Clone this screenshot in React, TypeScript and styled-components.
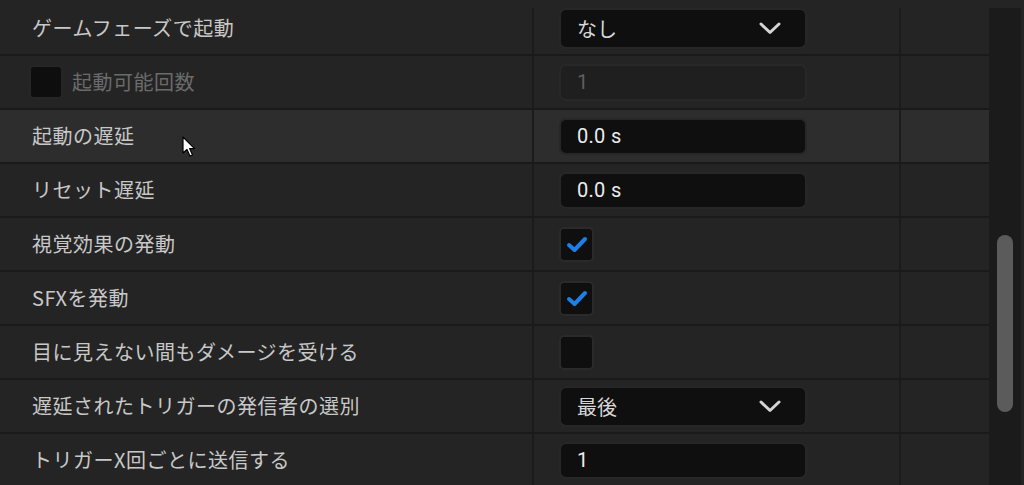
import React from "react";
import styled, { createGlobalStyle } from "styled-components";

const GlobalStyle = createGlobalStyle`
  html, body { margin: 0; padding: 0; background: #242424; }
  body { font-family: "Noto Sans CJK JP", "Noto Sans", sans-serif; }
  * { box-sizing: border-box; }
`;

const Panel = styled.div`
  position: relative;
  display: flex;
  width: 1024px;
  height: 485px;
  padding: 8px 3px 0 0;
  background: #242424;
  overflow: hidden;
`;

const Viewport = styled.div`
  flex: 1;
  overflow: hidden;
`;

const Content = styled.div`
  margin-top: -6px;
`;

const Row = styled.div<{ $hover?: boolean }>`
  display: grid;
  grid-template-columns: 534px 367px 1fr;
  height: 54px;
  border-bottom: 2px solid #1a1a1a;
  background: ${(p) => (p.$hover ? "#2d2d2d" : "#242424")};
`;

const LabelCell = styled.div`
  display: flex;
  align-items: center;
  gap: 9px;
  padding-left: 32px;
  border-right: 2px solid #1b1b1b;
`;

const LabelCellWithBox = styled(LabelCell)`
  padding-left: 29px;
`;

const Label = styled.span<{ $disabled?: boolean }>`
  font-size: 20px;
  color: ${(p) => (p.$disabled ? "#6b6b6b" : "#c8c8c8")};
  white-space: nowrap;
  letter-spacing: 0.5px;
  transform: translateY(-1px);
`;

const ValueCell = styled.div`
  display: flex;
  align-items: center;
  padding-left: 25px;
  border-right: 2px solid #1b1b1b;
`;

const ExtraCell = styled.div``;

const Dropdown = styled.div`
  display: flex;
  align-items: center;
  justify-content: space-between;
  width: 248px;
  height: 41px;
  padding: 0 24px 0 16px;
  background: #0f0f0f;
  border: 2px solid #272727;
  border-radius: 7px;
  font-size: 20px;
  color: #d8d8d8;
`;

const Input = styled.div<{ $disabled?: boolean }>`
  display: flex;
  align-items: center;
  width: 248px;
  height: 37px;
  padding: 0 16px;
  background: ${(p) => (p.$disabled ? "#1f1f1f" : "#0f0f0f")};
  border: 2px solid ${(p) => (p.$disabled ? "#282828" : "#272727")};
  border-radius: 7px;
  font-family: Roboto, "Noto Sans CJK JP", sans-serif;
  font-size: 20px;
  letter-spacing: 0.3px;
  color: ${(p) => (p.$disabled ? "#5e5e5e" : "#ececec")};
`;

const Box = styled.div`
  display: flex;
  align-items: center;
  justify-content: center;
  width: 35px;
  height: 35px;
  background: #0f0f0f;
  border: 2px solid #2a2a2a;
  border-radius: 5px;
`;

const SmallBox = styled(Box)`
  width: 34px;
  height: 34px;
  background: #0e0e0e;
  border-color: #262626;
`;

const Track = styled.div`
  position: relative;
  width: 32px;
  background: #1b1b1b;
`;

const Thumb = styled.div`
  position: absolute;
  left: 8px;
  width: 16px;
  border-radius: 8px;
  background: #5b5b5b;
`;

const Cursor = styled.svg`
  position: absolute;
  left: 182px;
  top: 136px;
`;

const Chevron = () => (
  <svg width="22" height="13" viewBox="0 0 22 13">
    <path d="M2 2 L11 10.5 L20 2" fill="none" stroke="#d4d4d4" strokeWidth="3" strokeLinecap="round" strokeLinejoin="round" />
  </svg>
);

const Check = () => (
  <svg width="28" height="28" viewBox="0 0 28 28">
    <path d="M6 15 L11.5 20 L22 9" fill="none" stroke="#1d80e6" strokeWidth="4" strokeLinecap="round" strokeLinejoin="round" />
  </svg>
);

type Ctrl =
  | { kind: "dropdown"; value: string }
  | { kind: "input"; value: string; disabled?: boolean }
  | { kind: "check"; checked: boolean };

const rows: { label: string; ctrl: Ctrl; hover?: boolean; toggle?: boolean }[] = [
  { label: "ゲームフェーズで起動", ctrl: { kind: "dropdown", value: "なし" } },
  { label: "起動可能回数", ctrl: { kind: "input", value: "1", disabled: true }, toggle: true },
  { label: "起動の遅延", ctrl: { kind: "input", value: "0.0 s" }, hover: true },
  { label: "リセット遅延", ctrl: { kind: "input", value: "0.0 s" } },
  { label: "視覚効果の発動", ctrl: { kind: "check", checked: true } },
  { label: "SFXを発動", ctrl: { kind: "check", checked: true } },
  { label: "目に見えない間もダメージを受ける", ctrl: { kind: "check", checked: false } },
  { label: "遅延されたトリガーの発信者の選別", ctrl: { kind: "dropdown", value: "最後" } },
  { label: "トリガーX回ごとに送信する", ctrl: { kind: "input", value: "1" } },
];

const renderCtrl = (c: Ctrl) => {
  if (c.kind === "dropdown")
    return (
      <Dropdown>
        <span>{c.value}</span>
        <Chevron />
      </Dropdown>
    );
  if (c.kind === "input") return <Input $disabled={c.disabled}>{c.value}</Input>;
  return <Box>{c.checked && <Check />}</Box>;
};

export default function App() {
  return (
    <>
      <GlobalStyle />
      <Panel>
        <Viewport>
          <Content>
            {rows.map((r, i) => (
              <Row key={i} $hover={r.hover}>
                {r.toggle ? (
                  <LabelCellWithBox>
                    <SmallBox />
                    <Label $disabled>{r.label}</Label>
                  </LabelCellWithBox>
                ) : (
                  <LabelCell>
                    <Label>{r.label}</Label>
                  </LabelCell>
                )}
                <ValueCell>{renderCtrl(r.ctrl)}</ValueCell>
                <ExtraCell />
              </Row>
            ))}
          </Content>
        </Viewport>
        <Track>
          <Thumb style={{ top: 227, height: 177 }} />
        </Track>
        <Cursor width="14" height="22" viewBox="0 0 14 22">
          <path d="M1 1 L1 17 L5 13.5 L8 20 L10.5 19 L7.6 12.6 L12.5 12.6 Z" fill="#fff" stroke="#000" strokeWidth="1.2" strokeLinejoin="round" />
        </Cursor>
      </Panel>
    </>
  );
}
